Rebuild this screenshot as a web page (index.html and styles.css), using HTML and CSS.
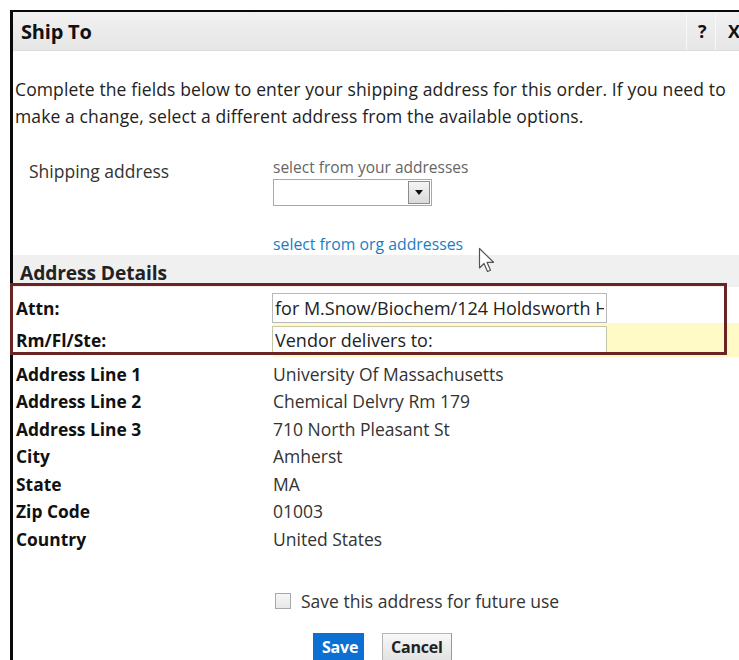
FILE: index.html
```html
<!DOCTYPE html>
<html lang="en">
<head>
<meta charset="utf-8">
<title>Ship To</title>
<link rel="stylesheet" href="styles.css">
</head>
<body>
<div class="dialog">
  <div class="titlebar">
    <span class="title">Ship To</span>
    <span class="tools">
      <span class="tool">?</span>
      <span class="tool">X</span>
    </span>
  </div>

  <p class="intro">Complete the fields below to enter your shipping address for this order. If you need to make a change, select a different address from the available options.</p>

  <div class="pick">
    <div class="pick-label">Shipping address</div>
    <div class="pick-field">
      <div class="hint">select from your addresses</div>
      <div class="select">
        <span class="select-btn"><span class="caret"></span></span>
      </div>
      <a class="org-link" href="#">select from org addresses</a>
    </div>
  </div>

  <div class="section">Address Details</div>

  <div class="details">
    <div class="row edit">
      <div class="lbl">Attn:</div>
      <div class="val"><input class="txt" type="text" value="for M.Snow/Biochem/124 Holdsworth Hall"></div>
    </div>
    <div class="row edit focus">
      <div class="lbl">Rm/Fl/Ste:</div>
      <div class="val"><input class="txt" type="text" value="Vendor delivers to:"></div>
    </div>
    <div class="static">
      <div class="row"><div class="lbl">Address Line 1</div><div class="val">University Of Massachusetts</div></div>
      <div class="row"><div class="lbl">Address Line 2</div><div class="val">Chemical Delvry Rm 179</div></div>
      <div class="row"><div class="lbl">Address Line 3</div><div class="val">710 North Pleasant St</div></div>
      <div class="row"><div class="lbl">City</div><div class="val">Amherst</div></div>
      <div class="row"><div class="lbl">State</div><div class="val">MA</div></div>
      <div class="row"><div class="lbl">Zip Code</div><div class="val">01003</div></div>
      <div class="row"><div class="lbl">Country</div><div class="val">United States</div></div>
    </div>
    <div class="highlight"></div>
  </div>

  <label class="save-check">
    <span class="box"></span>
    <span>Save this address for future use</span>
  </label>

  <div class="actions">
    <button class="btn primary" type="button">Save</button>
    <button class="btn" type="button">Cancel</button>
  </div>

  <svg class="pointer" width="20" height="28" viewBox="0 0 20 28">
    <path d="M1.5 1.5 L1.5 21 L6 16.5 L9.5 24.5 L12.5 23.2 L9 15.3 L15.5 15.3 Z" fill="#fff" stroke="#555" stroke-width="1.2" stroke-linejoin="round"/>
  </svg>
</div>
</body>
</html>
```

FILE: styles.css
```css
html, body {
  margin: 0;
  padding: 0;
  background: #fff;
}

body {
  font-family: "Open Sans", "Noto Sans", sans-serif;
  color: #222;
  overflow: hidden;
  height: 660px;
}

.dialog {
  position: relative;
  margin: 10px 0 0 10px;
  border-left: 3px solid #0a0a0a;
  border-top: 2px solid #0a0a0a;
  height: 660px;
}

/* title bar */
.titlebar {
  height: 38px;
  display: flex;
  align-items: center;
  justify-content: space-between;
  background: linear-gradient(#f1f1f1, #e6e6e6);
  border-bottom: 1px solid #dcdcdc;
}

.title {
  font-weight: 700;
  font-size: 20px;
  color: #111;
  padding-left: 8px;
  letter-spacing: -0.2px;
}

.tools {
  display: flex;
  height: 100%;
}

.tool {
  display: flex;
  align-items: center;
  font-weight: 700;
  font-size: 18px;
  color: #111;
  padding-left: 11px;
  width: 17px;
  border-left: 1px solid #f8f8f8;
}

.tool:last-child {
  padding-left: 12px;
  width: 11px;
}

/* intro text */
.intro {
  margin: 25px 0 0 2px;
  padding-right: 0;
  font-size: 17.5px;
  line-height: 27px;
  color: #222;
  letter-spacing: 0.12px;
}

/* address picker */
.pick {
  display: flex;
  margin-top: 27px;
  height: 98px;
}

.pick-label {
  width: 244px;
  padding-left: 16px;
  font-size: 17.5px;
  line-height: 22px;
  color: #333;
  padding-top: 3px;
}

.pick-field {
  display: flex;
  flex-direction: column;
  align-items: flex-start;
}

.hint {
  font-size: 15.5px;
  color: #666;
  line-height: 20px;
}

.select {
  width: 157px;
  height: 25px;
  border: 1px solid #a9a9a9;
  background: #fff;
  display: flex;
  justify-content: flex-end;
  margin-top: 2px;
}

.select-btn {
  width: 22px;
  height: 23px;
  margin: 1px 1px 0 0;
  border: 1px solid #8c8c8c;
  box-sizing: border-box;
  background: linear-gradient(#f4f4f4, #dadada);
  display: flex;
  align-items: center;
  justify-content: center;
}

.caret {
  width: 0;
  height: 0;
  border-left: 4px solid transparent;
  border-right: 4px solid transparent;
  border-top: 5px solid #111;
}

.org-link {
  margin-top: 28px;
  font-size: 15.8px;
  line-height: 20px;
  color: #1a7ec3;
  text-decoration: none;
}

/* section header */
.section {
  background: #f0f0f0;
  height: 32px;
  padding-left: 7px;
  font-weight: 700;
  font-size: 19.2px;
  color: #222;
  line-height: 35px;
  letter-spacing: -0.1px;
}

/* detail rows */
.details {
  position: relative;
}

.row {
  display: flex;
  align-items: center;
  height: 27.5px;
}

.row.edit {
  height: 36px;
  box-sizing: border-box;
  padding-top: 5px;
}

.row.focus {
  height: 34px;
  padding-top: 0;
}

.static {
  padding-top: 3px;
}

.lbl {
  width: 257px;
  padding-left: 3px;
  font-weight: 700;
  font-size: 17.4px;
  color: #111;
}

.val {
  flex: 1;
  font-size: 17.5px;
  color: #333;
  height: 100%;
  display: flex;
  align-items: center;
}

.row.focus .val {
  background: #fffac6;
}

.txt {
  box-sizing: border-box;
  width: 335px;
  height: 30px;
  border: 1px solid #b9b9b9;
  font-family: inherit;
  font-size: 18px;
  color: #222;
  padding: 0 2px;
  margin: 0 0 0 -1px;
  background: #fff;
  outline: none;
}

.row.focus .txt {
  border-color: #c7c6a8;
  height: 28px;
}

/* red annotation frame around the editable rows */
.highlight {
  position: absolute;
  left: -3px;
  top: -4px;
  width: 717px;
  height: 72px;
  box-sizing: border-box;
  border: 3px solid #6a2424;
  pointer-events: none;
}

/* save checkbox */
.save-check {
  display: flex;
  align-items: center;
  margin: 37px 0 0 262px;
  font-size: 17.5px;
  line-height: 22px;
  color: #333;
}

.box {
  width: 14px;
  height: 14px;
  border: 1px solid #a8a8a8;
  background: linear-gradient(#f6f6f6, #e8e8e8);
  margin-right: 10px;
}

/* buttons */
.actions {
  display: flex;
  margin: 21px 0 0 300px;
  gap: 18px;
}

.btn {
  height: 28px;
  font-family: inherit;
  font-weight: 700;
  font-size: 16px;
  line-height: 26px;
  padding: 0 8px;
  border: 1px solid #b5b5b5;
  border-right-color: #999;
  background: linear-gradient(#f8f8f8, #e2e2e2);
  color: #222;
  border-radius: 0;
  letter-spacing: -0.2px;
}

.btn.primary {
  background: #0b6fd3;
  border-color: #0b6fd3;
  color: #fff;
  width: 51px;
}

/* mouse pointer */
.pointer {
  position: absolute;
  left: 465px;
  top: 235px;
}
```
